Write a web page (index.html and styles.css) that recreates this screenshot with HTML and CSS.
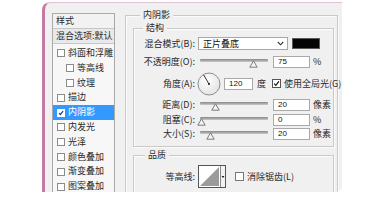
FILE: index.html
```html
<!DOCTYPE html>
<html lang="zh-CN">
<head>
<meta charset="utf-8">
<title>图层样式 - 内阴影</title>
<link rel="stylesheet" href="styles.css">
</head>
<body>
<div class="dialog">
  <div class="styles-list">
    <div class="list-head">样式</div>
    <div class="list-head blend">混合选项:默认</div>
    <ul class="items">
      <li class="item"><span class="cb"></span>斜面和浮雕</li>
      <li class="item sub"><span class="cb"></span>等高线</li>
      <li class="item sub"><span class="cb"></span>纹理</li>
      <li class="item"><span class="cb"></span>描边</li>
      <li class="item selected"><span class="cb"><svg viewBox="0 0 8 8" width="8" height="8"><path d="M1.3 4.2 L3.2 6 L6.8 1.6" fill="none" stroke="#1b3d8f" stroke-width="1.6"/></svg></span>内阴影</li>
      <li class="item"><span class="cb"></span>内发光</li>
      <li class="item"><span class="cb"></span>光泽</li>
      <li class="item"><span class="cb"></span>颜色叠加</li>
      <li class="item"><span class="cb"></span>渐变叠加</li>
      <li class="item"><span class="cb"></span>图案叠加</li>
    </ul>
  </div>

  <div class="panel">
    <div class="group outer">
      <span class="group-title">内阴影</span>

      <div class="group structure">
        <span class="group-title">结构</span>

        <div class="row row-blend">
          <span class="label">混合模式(B):</span>
          <div class="select"><span class="select-text">正片叠底</span>
            <svg class="chev" viewBox="0 0 7 5" width="7" height="5"><path d="M0.8 1 L3.5 3.8 L6.2 1" fill="none" stroke="#333" stroke-width="1.1"/></svg>
          </div>
          <span class="swatch"></span>
        </div>

        <div class="row row-slider row-opacity">
          <span class="label">不透明度(O):</span>
          <div class="slider"><svg class="thumb" style="left:49px" viewBox="0 0 9 8" width="9" height="8"><path d="M4.5 0.8 L8.2 7.2 L0.8 7.2 Z" fill="#f4f4f4" stroke="#7a7a7a" stroke-width="1"/></svg></div>
          <span class="num">75</span>
          <span class="unit">%</span>
        </div>

        <div class="row row-angle">
          <span class="label">角度(A):</span>
          <svg class="dial" viewBox="0 0 24 24" width="24" height="24">
            <defs>
              <radialGradient id="dg" cx="40%" cy="35%" r="70%">
                <stop offset="0" stop-color="#ffffff"/>
                <stop offset="1" stop-color="#e2e2e2"/>
              </radialGradient>
            </defs>
            <circle cx="12" cy="12" r="11" fill="url(#dg)" stroke="#8e8e8e" stroke-width="1"/>
            <line x1="12" y1="12" x2="6.6" y2="2.8" stroke="#333" stroke-width="1"/>
            <circle cx="12" cy="12" r="1.1" fill="#222"/>
          </svg>
          <span class="num angle-num">120</span>
          <span class="unit">度</span>
          <span class="cb big-cb"><svg viewBox="0 0 9 9" width="9" height="9"><path d="M1.5 4.6 L3.6 6.8 L7.6 1.8" fill="none" stroke="#111" stroke-width="1.5"/></svg></span>
          <span class="cb-label">使用全局光(G)</span>
        </div>

        <div class="row row-slider row-dist">
          <span class="label">距离(D):</span>
          <div class="slider"><svg class="thumb" style="left:11px" viewBox="0 0 9 8" width="9" height="8"><path d="M4.5 0.8 L8.2 7.2 L0.8 7.2 Z" fill="#f4f4f4" stroke="#7a7a7a" stroke-width="1"/></svg></div>
          <span class="num">20</span>
          <span class="unit">像素</span>
        </div>

        <div class="row row-slider row-tight">
          <span class="label">阻塞(C):</span>
          <div class="slider"><svg class="thumb" style="left:-3px" viewBox="0 0 9 8" width="9" height="8"><path d="M4.5 0.8 L8.2 7.2 L0.8 7.2 Z" fill="#f4f4f4" stroke="#7a7a7a" stroke-width="1"/></svg></div>
          <span class="num">0</span>
          <span class="unit">%</span>
        </div>

        <div class="row row-slider row-tight">
          <span class="label">大小(S):</span>
          <div class="slider"><svg class="thumb" style="left:6px" viewBox="0 0 9 8" width="9" height="8"><path d="M4.5 0.8 L8.2 7.2 L0.8 7.2 Z" fill="#f4f4f4" stroke="#7a7a7a" stroke-width="1"/></svg></div>
          <span class="num">20</span>
          <span class="unit">像素</span>
        </div>
      </div>

      <div class="group quality">
        <span class="group-title">品质</span>
        <div class="row row-contour">
          <span class="label">等高线:</span>
          <svg class="contour" viewBox="0 0 28 23" width="28" height="23">
            <rect x="0.5" y="0.5" width="27" height="22" fill="#fff" stroke="#555"/>
            <polygon points="2,21 21,2 21,21" fill="#9b9b9b"/>
            <line x1="22.5" y1="1" x2="22.5" y2="22" stroke="#888"/>
            <rect x="23" y="1" width="4" height="21" fill="#f2f2f2"/>
            <path d="M23.6 11 L26.4 11 L25 13 Z" fill="#111"/>
          </svg>
          <span class="cb small-cb"></span>
          <span class="cb-label">消除锯齿(L)</span>
        </div>
      </div>
    </div>
  </div>
</div>
</body>
</html>
```

FILE: styles.css
```css
html, body {
  margin: 0;
  padding: 0;
  background: #ffffff;
}

body {
  font-family: "Noto Sans CJK SC", "Noto Sans", sans-serif;
  font-size: 9px;
  color: #2a2a2a;
  width: 374px;
  height: 200px;
  overflow: hidden;
}

.dialog {
  box-sizing: border-box;
  margin: 2px 0 0 42px;
  width: 300px;
  height: 190px;
  background: #f0f0f0;
  border-left: 3px solid #c47aa3;
  border-top: 1px solid #e2c3d5;
  border-top-left-radius: 8px;
  border-bottom-right-radius: 6px;
  display: flex;
  align-items: flex-start;
  padding: 10px 0 0 7px;
  overflow: hidden;
}

/* ---------- left styles list ---------- */
.styles-list {
  box-sizing: border-box;
  width: 63px;
  height: 200px;
  flex-shrink: 0;
  border: 1px solid #a9a9a9;
  background: #f7f7f7;
}

.list-head {
  height: 14px;
  line-height: 14px;
  padding-left: 3px;
  border-bottom: 1px solid #c6c6c6;
  background: #f2f2f2;
  white-space: nowrap;
}

.list-head.blend {
  background: #e9e9e9;
}

.items {
  list-style: none;
  margin: 0;
  padding: 2px 0 0 0;
}

.item {
  height: 14.8px;
  line-height: 14.8px;
  display: flex;
  align-items: center;
  padding-left: 4px;
  white-space: nowrap;
}

.item.sub {
  padding-left: 13px;
}

.item.selected {
  background: #3399ff;
  color: #fff;
}

.cb {
  box-sizing: border-box;
  width: 8px;
  height: 8px;
  border: 1px solid #8b8b8b;
  background: #fff;
  margin-right: 3px;
  flex-shrink: 0;
  display: inline-flex;
  align-items: center;
  justify-content: center;
}

.cb svg {
  display: block;
}

.item.selected .cb {
  border-color: #fff;
}

/* ---------- right panel ---------- */
.panel {
  margin-left: 10px;
  margin-top: 2px;
}

.group {
  position: relative;
  box-sizing: border-box;
  border: 1px solid #c9c9c9;
  box-shadow: inset 1px 1px 0 #fbfbfb, 1px 1px 0 #fbfbfb;
}

.group-title {
  position: absolute;
  top: -7px;
  left: 14px;
  line-height: 12px;
  padding: 0 3px;
  background: #f0f0f0;
  white-space: nowrap;
}

.outer {
  width: 213px;
  height: 190px;
  padding: 0;
}

.structure {
  margin: 12px 3px 0 7px;
  padding: 8px 0 6px 0;
}

.structure > .group-title {
  left: 9px;
}

.quality {
  margin: 8px 3px 0 7px;
  padding: 9px 0 10px 0;
}

.quality > .group-title {
  left: 11px;
}

.row {
  display: flex;
  align-items: center;
  white-space: nowrap;
}

.label {
  box-sizing: border-box;
  width: 63px;
  padding-right: 2px;
  flex-shrink: 0;
  text-align: right;
  line-height: 12px;
}

.row-blend {
  height: 13px;
}

.select {
  box-sizing: border-box;
  margin-left: 1px;
  width: 90px;
  height: 13px;
  border: 1px solid #a7a7a7;
  background: #fff;
  display: flex;
  align-items: center;
  justify-content: space-between;
  padding: 0 3px 0 4px;
}

.select-text {
  line-height: 11px;
  color: #111;
}

.chev {
  display: block;
}

.swatch {
  box-sizing: border-box;
  margin-left: 4px;
  width: 28px;
  height: 11px;
  background: #050505;
  border: 1px solid #5a5a5a;
}

.row-slider {
  height: 12px;
}

.row-opacity {
  margin-top: 6px;
}

.row-angle {
  margin-top: 4px;
  height: 23px;
}

.row-dist {
  margin-top: 4px;
}

.row-tight {
  margin-top: 2.5px;
}

.slider {
  position: relative;
  margin-left: 3px;
  width: 68px;
  height: 12px;
  flex-shrink: 0;
}

.slider::before {
  content: "";
  position: absolute;
  left: 0;
  right: 0;
  top: 3px;
  height: 3px;
  border-radius: 1px;
  background: linear-gradient(#868686, #c9c9c9);
}

.thumb {
  position: absolute;
  top: 4px;
  display: block;
}

.num {
  box-sizing: border-box;
  margin-left: 5px;
  width: 37px;
  height: 12px;
  border: 1px solid #a9a9a9;
  background: #fff;
  font-family: "Liberation Sans", Arial, sans-serif;
  font-size: 8px;
  line-height: 10px;
  padding-left: 4px;
  color: #111;
  flex-shrink: 0;
}

.unit {
  margin-left: 3px;
  line-height: 12px;
}

.dial {
  display: block;
  margin-left: 0;
  flex-shrink: 0;
}

.angle-num {
  margin-left: 3px;
  width: 29px;
}

.row-angle .unit {
  margin-left: 4px;
}

.big-cb {
  width: 9px;
  height: 9px;
  margin-left: 6px;
  margin-right: 0;
  border-color: #555;
}

.cb-label {
  margin-left: 3px;
  line-height: 12px;
}

.row-contour {
  height: 23px;
}

.contour {
  display: block;
  margin-left: 1px;
  flex-shrink: 0;
}

.small-cb {
  width: 9px;
  height: 9px;
  margin-left: 9px;
  margin-right: 0;
  border-color: #777;
}
```
